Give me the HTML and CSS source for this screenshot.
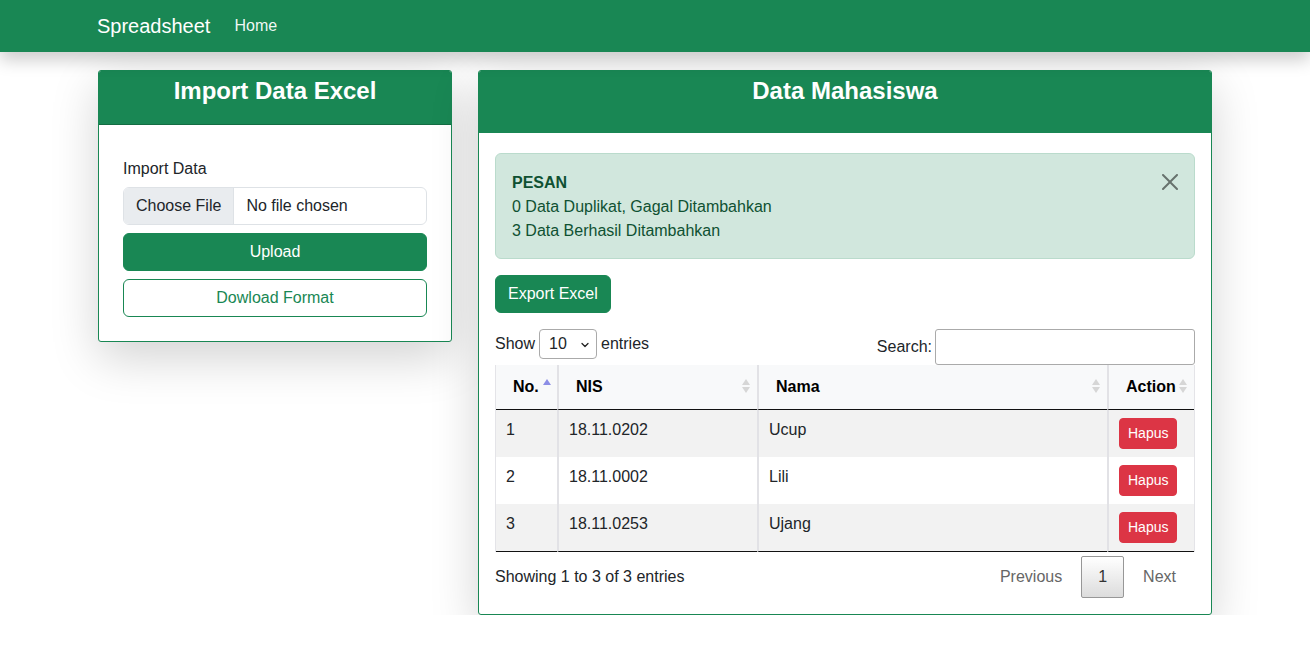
FILE: index.html
```html
<!DOCTYPE html>
<html lang="id">
<head>
<meta charset="utf-8">
<title>Spreadsheet</title>
<link rel="stylesheet" href="styles.css">
</head>
<body>
<nav class="navbar">
  <div class="nav-inner">
    <a class="brand" href="#">Spreadsheet</a>
    <a class="nav-link" href="#">Home</a>
  </div>
</nav>

<main class="main">
  <section class="card card-left">
    <div class="card-header">
      <h3 class="card-title">Import Data Excel</h3>
    </div>
    <div class="card-body body-left">
      <label class="form-label">Import Data</label>
      <div class="file-input">
        <span class="file-btn">Choose File</span>
        <span class="file-name">No file chosen</span>
      </div>
      <button class="btn btn-success btn-block">Upload</button>
      <button class="btn btn-outline btn-block">Dowload Format</button>
    </div>
  </section>

  <section class="card card-right">
    <div class="card-header header-right">
      <h3 class="card-title">Data Mahasiswa</h3>
    </div>
    <div class="card-body body-right">
      <div class="alert">
        <div class="alert-title">PESAN</div>
        <div>0 Data Duplikat, Gagal Ditambahkan</div>
        <div>3 Data Berhasil Ditambahkan</div>
        <button class="btn-close" aria-label="Close">
          <svg width="16" height="16" viewBox="0 0 16 16"><path d="M.293.293a1 1 0 0 1 1.414 0L8 6.586 14.293.293a1 1 0 1 1 1.414 1.414L9.414 8l6.293 6.293a1 1 0 0 1-1.414 1.414L8 9.414l-6.293 6.293a1 1 0 0 1-1.414-1.414L6.586 8 .293 1.707a1 1 0 0 1 0-1.414z" fill="#000"/></svg>
        </button>
      </div>

      <button class="btn btn-success btn-export">Export Excel</button>

      <div class="dt-controls">
        <div class="dt-length">
          <span>Show</span>
          <span class="select">10
            <svg class="chev" width="10" height="8" viewBox="0 0 16 16"><path d="M2 5l6 6 6-6" fill="none" stroke="#222" stroke-width="2.6" stroke-linecap="round" stroke-linejoin="round"/></svg>
          </span>
          <span>entries</span>
        </div>
        <div class="dt-search">
          <span>Search:</span>
          <span class="search-input"></span>
        </div>
      </div>

      <table class="dt-table">
        <colgroup>
          <col class="c-no"><col class="c-nis"><col class="c-nama"><col class="c-act">
        </colgroup>
        <thead>
          <tr>
            <th class="sort-asc">No.</th>
            <th class="sort">NIS</th>
            <th class="sort">Nama</th>
            <th class="sort">Action</th>
          </tr>
        </thead>
        <tbody>
          <tr class="odd"><td>1</td><td>18.11.0202</td><td>Ucup</td><td><span class="btn-hapus">Hapus</span></td></tr>
          <tr><td>2</td><td>18.11.0002</td><td>Lili</td><td><span class="btn-hapus">Hapus</span></td></tr>
          <tr class="odd"><td>3</td><td>18.11.0253</td><td>Ujang</td><td><span class="btn-hapus">Hapus</span></td></tr>
        </tbody>
      </table>

      <div class="dt-footer">
        <div class="dt-info">Showing 1 to 3 of 3 entries</div>
        <div class="dt-paginate">
          <span class="page-btn disabled">Previous</span>
          <span class="page-btn current">1</span>
          <span class="page-btn disabled page-next">Next</span>
        </div>
      </div>
    </div>
  </section>
</main>
</body>
</html>
```

FILE: styles.css
```css
* { box-sizing: border-box; }

body {
  margin: 0;
  font-family: "Liberation Sans", Arial, sans-serif;
  font-size: 16px;
  line-height: 1.5;
  color: #212529;
  background: #fff;
}

a { text-decoration: none; }

.navbar {
  position: relative;
  z-index: 2;
  height: 52px;
  background: #198754;
  box-shadow: 0 8px 16px rgba(0, 0, 0, 0.2);
}

.nav-inner {
  width: 1116px;
  height: 100%;
  margin: 0 auto;
  display: flex;
  align-items: center;
}

.brand {
  color: #fff;
  font-size: 20px;
  line-height: 30px;
  margin-right: 16px;
}

.nav-link {
  color: rgba(255, 255, 255, 0.95);
  padding: 8px;
}

.main {
  width: 1114px;
  margin: 18px auto 0;
  display: grid;
  grid-template-columns: 354px 734px;
  column-gap: 26px;
  align-items: start;
}

.card {
  background: #fff;
  border: 1px solid #198754;
  border-radius: 3px;
  overflow: hidden;
  box-shadow: 0 16px 48px rgba(0, 0, 0, 0.175);
}

.card-header {
  background: #198754;
  color: #fff;
  text-align: center;
  padding: 6px 16px 10px;
  border-bottom: 1px solid #146c43;
}

.header-right { padding-bottom: 18px; border-bottom-color: #198754; }

.card-title {
  margin: 0 0 8px;
  font-size: 24px;
  line-height: 28.8px;
  font-weight: 700;
}

.body-left { padding: 32px 24px 24px; }

.form-label {
  display: block;
  margin-bottom: 6px;
}

.file-input {
  display: flex;
  height: 38px;
  border: 1px solid #dee2e6;
  border-radius: 6px;
  overflow: hidden;
  line-height: 36px;
}

.file-btn {
  background: #e9ecef;
  padding: 0 12px;
  border-right: 1px solid #dee2e6;
}

.file-name { padding: 0 12px; }

.btn {
  display: inline-block;
  height: 38px;
  padding: 6px 12px;
  font-family: inherit;
  font-size: 16px;
  line-height: 24px;
  border: 1px solid transparent;
  border-radius: 6px;
  cursor: pointer;
}

.btn-block {
  display: block;
  width: 100%;
  margin-top: 8px;
}

.btn-success {
  background: #198754;
  border-color: #198754;
  color: #fff;
}

.btn-outline {
  background: #fff;
  border-color: #198754;
  color: #198754;
}

.body-right { padding: 20px 16px 16px; }

.alert {
  position: relative;
  padding: 17px 48px 15px 16px;
  background: #d1e7dd;
  border: 1px solid #badbcc;
  border-radius: 6px;
  color: #0f5132;
}

.alert-title { font-weight: 700; }

.btn-close {
  position: absolute;
  top: 0;
  right: 0;
  padding: 20px 16px;
  border: 0;
  background: transparent;
  opacity: 0.5;
  line-height: 0;
}

.btn-export {
  margin-top: 16px;
}

.dt-controls {
  margin-top: 16px;
  display: flex;
  justify-content: space-between;
  align-items: flex-start;
}

.dt-length {
  display: flex;
  align-items: center;
  gap: 4px;
  height: 30px;
}

.select {
  position: relative;
  width: 58px;
  height: 30px;
  border: 1px solid #aaa;
  border-radius: 4px;
  padding-left: 9px;
  line-height: 28px;
}

.chev {
  position: absolute;
  right: 6px;
  top: 11px;
}

.dt-search {
  display: flex;
  align-items: center;
  gap: 3px;
  height: 36px;
}

.search-input {
  width: 260px;
  height: 36px;
  border: 1px solid #aaa;
  border-radius: 3px;
}

.dt-table {
  width: 700px;
  table-layout: fixed;
  border-collapse: separate;
  border-spacing: 0;
  border-left: 1px solid #e4e4e8;
  border-right: 1px solid #e4e4e8;
}

.c-no { width: 61px; }
.c-nis { width: 200px; }
.c-nama { width: 350px; }
.c-act { width: 87px; }

.dt-table th {
  position: relative;
  text-align: left;
  background: #f8f9fa;
  color: #000;
  font-weight: 700;
  padding: 10px 17px;
  line-height: 24px;
  border-bottom: 1px solid #111;
}

.dt-table th + th,
.dt-table td + td {
  border-left: 2px solid #e2e2e6;
}

.dt-table td {
  padding: 8px 10px;
  line-height: 24px;
  vertical-align: top;
}

.dt-table tbody tr.odd td { background: #f2f2f2; }

.dt-table tbody tr:last-child td { border-bottom: 1px solid #111; }

.sort::before,
.sort::after,
.sort-asc::before {
  content: "";
  position: absolute;
  right: 7px;
  width: 0;
  height: 0;
  border-left: 4px solid transparent;
  border-right: 4px solid transparent;
}

.sort::before,
.sort-asc::before {
  top: 14px;
  border-bottom: 6px solid #d6d6d6;
}

.sort::after {
  top: 22px;
  border-top: 6px solid #d6d6d6;
}

.sort-asc::before {
  border-bottom-color: #8c8ee6;
  right: 6px;
}

.btn-hapus {
  display: inline-block;
  height: 31px;
  padding: 4px 8px;
  font-size: 14px;
  line-height: 21px;
  color: #fff;
  background: #dc3545;
  border: 1px solid #dc3545;
  border-radius: 4px;
}

.dt-footer {
  margin-top: 4px;
  display: flex;
  justify-content: space-between;
  align-items: flex-start;
}

.dt-info { padding-top: 9px; }

.dt-paginate { display: flex; }

.page-btn {
  display: inline-block;
  padding: 8px 16px;
  line-height: 24px;
  border: 1px solid transparent;
  border-radius: 2px;
  margin-left: 2px;
  color: #666;
}

.page-next { padding-right: 18px; }

.page-btn.current {
  color: #333;
  border-color: #979797;
  background: linear-gradient(to bottom, #fff 0%, #dcdcdc 100%);
  padding: 8px 16px;
}
```
